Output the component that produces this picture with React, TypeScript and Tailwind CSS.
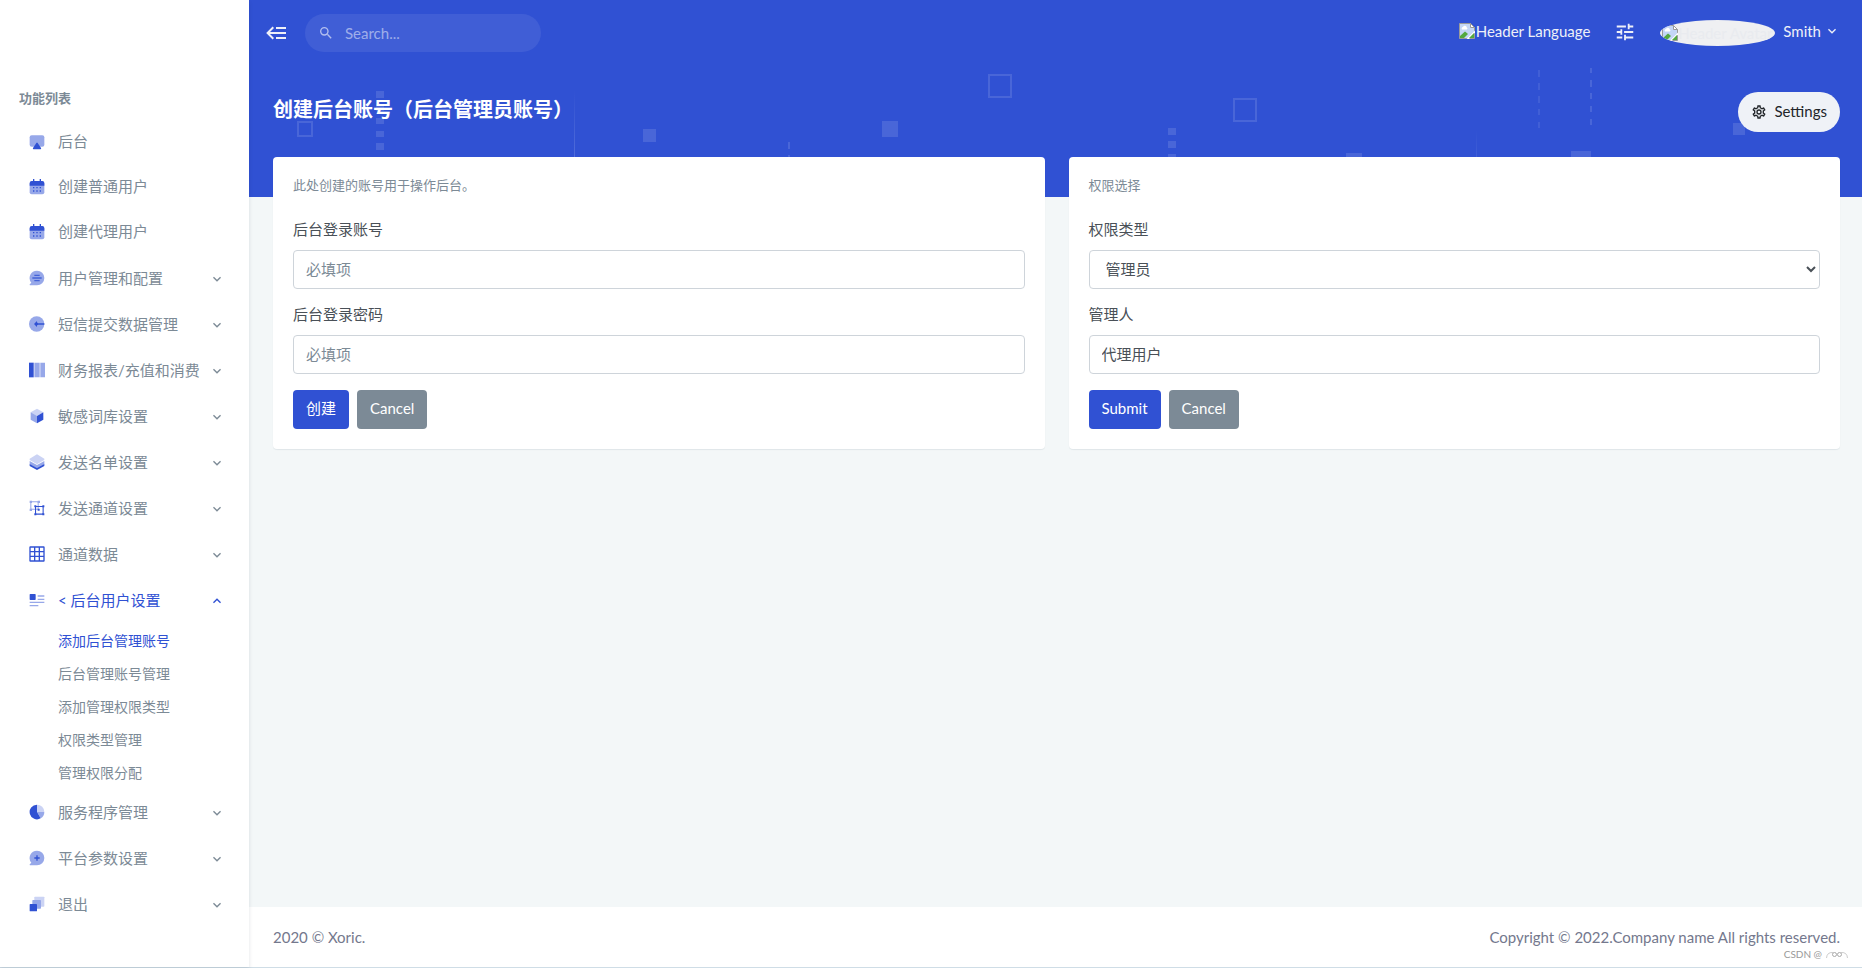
import { useState } from "react";
import type { ReactNode } from "react";

function SvgIcon({ children, className = "size-4" }: { children: ReactNode; className?: string }) {
  return (
    <svg viewBox="0 0 24 24" fill="currentColor" className={`shrink-0 ${className}`} aria-hidden="true">
      {children}
    </svg>
  );
}

const ChevronDown = ({ className }: { className: string }) => (
  <SvgIcon className={className}>
    <path d="M7.41 8.58 12 13.17l4.59-4.59L18 10l-6 6-6-6z" />
  </SvgIcon>
);

const icons: Record<string, ReactNode> = {
  airplay: (
    <>
      <path d="M4 2h16a3 3 0 0 1 3 3v11a3 3 0 0 1-3 3H4a3 3 0 0 1-3-3V5a3 3 0 0 1 3-3z" opacity=".5" />
      <path d="M11 13.5a1.3 1.3 0 0 1 2 0l5 7.5q.8 2-1 2H7q-1.8 0-1-2z" />
    </>
  ),
  calendar: (
    <>
      <rect x="1" y="4" width="22" height="19" rx="3" opacity=".5" />
      <path d="M1 10V6a3 3 0 0 1 3-3h16a3 3 0 0 1 3 3v4z" />
      <path d="M6 0h2v5H6zM16 0h2v5h-2z" />
      <path d="M6 12h2v2H6zm5 0h2v2h-2zm5 0h2v2h-2zM6 17h2v2H6zm5 0h2v2h-2zm5 0h2v2h-2z" />
    </>
  ),
  comment: (
    <>
      <path d="M12 1a11 11 0 1 1 0 22H1.5Q.5 22 1.5 21l2-2A11 11 0 0 1 12 1z" opacity=".5" />
      <path d="M8 7h8v2H8zM5 11h14v2H5zM8 15h8v2H8z" opacity=".8" />
    </>
  ),
  back: (
    <>
      <circle cx="11.5" cy="12" r="11.5" opacity=".5" />
      <path d="M7.5 12 12 7.5V11h11v2H12v3.5z" />
      <circle cx="11.5" cy="12" r="2.2" />
    </>
  ),
  columns: (
    <>
      <path d="M0 1h7v22H0z" />
      <path d="M7 1h2v22H7zM15.5 1h2v22h-2z" opacity=".3" />
      <path d="M9 1h6.5v22H9zM17.5 1H24v22h-6.5z" opacity=".5" />
    </>
  ),
  box: (
    <>
      <path d="m12 1 9.5 5.500L12 12 2.500 6.500z" opacity=".25" />
      <path d="M2.500 6.500 12 12v11l-9.500-5.500z" opacity=".5" />
      <path d="M21.500 6.500 12 12v11l9.500-5.500z" />
    </>
  ),
  layers: (
    <>
      <path d="m1 15 11 6 11-6v3l-11 6-11-6z" />
      <path d="m1 10.500 11 6 11-6v5l-11 6-11-6z" opacity=".5" />
      <path d="m12 .500 11 6.500v2l-11 6.500L1 9V7z" fill="#cbd3f4" />
    </>
  ),
  group: (
    <>
      <g opacity=".5">
        <path d="M2 2h12.500v12.500H2zm1.500 1.500V13H13V3.500z" fillRule="evenodd" />
        <path d="M1 1h3.500v3.500H1zm12 0h3.500v3.500H13zM1 13h3.500v3.500H1z" />
      </g>
      <path d="M9 9h13v13H9zm1.600 1.600v9.800h9.800v-9.800z" fillRule="evenodd" />
      <path d="M8 8h3v3H8zm12 0h3v3h-3zM8 20h3v3H8zm12 0h3v3h-3zM13 13h3v3h-3z" />
    </>
  ),
  grid: (
    <path
      d="M2 .5h20a1.500 1.500 0 0 1 1.500 1.500v20a1.500 1.500 0 0 1-1.500 1.500H2A1.500 1.500 0 0 1 .5 22V2A1.500 1.500 0 0 1 2 .5zM2.500 2.500v5h5v-5zm7 0v5h5v-5zm7 0v5h5v-5zm-14 7v5h5v-5zm7 0v5h5v-5zm7 0v5h5v-5zm-14 7v5h5v-5zm7 0v5h5v-5zm7 0v5h5v-5z"
      fillRule="evenodd"
    />
  ),
  document: (
    <>
      <rect x="1" y="3" width="9" height="9" rx="1" />
      <path d="M13 5h10v2H13zM13 10h10v2H13zM1 14.500h22v2H1zM1 19.500h13v2H1z" opacity=".5" />
    </>
  ),
  pie: (
    <>
      <path d="M12 1v11l5.500 9.500A11 11 0 1 1 12 1z" />
      <path d="M12 12h11a11 11 0 0 1-5.500 9.500z" opacity=".5" />
      <path d="M12 1a11 11 0 0 1 11 11H12z" opacity=".25" />
    </>
  ),
  commentPlus: (
    <>
      <path d="M12 1a11 11 0 1 1 0 22H1.500Q.5 22 1.500 21l2-2A11 11 0 0 1 12 1z" opacity=".5" />
      <path d="M11 8h2v3h3v2h-3v3h-2v-3H8v-2h3z" />
    </>
  ),
  copies: (
    <>
      <rect x="8" y="1" width="15" height="15" rx="1" fill="#cbd3f4" />
      <rect x="5" y="6" width="13" height="13" rx="1" fill="#97a8e9" />
      <rect x="1" y="12" width="11" height="11" rx="1" />
    </>
  ),
};

const links = [
  { icon: "airplay", label: "后台" },
  { icon: "calendar", label: "创建普通用户" },
  { icon: "calendar", label: "创建代理用户" },
];

const groups = [
  { icon: "comment", label: "用户管理和配置" },
  { icon: "back", label: "短信提交数据管理" },
  { icon: "columns", label: "财务报表/充值和消费" },
  { icon: "box", label: "敏感词库设置" },
  { icon: "layers", label: "发送名单设置" },
  { icon: "group", label: "发送通道设置" },
  { icon: "grid", label: "通道数据" },
  {
    icon: "document",
    label: "< 后台用户设置",
    children: ["添加后台管理账号", "后台管理账号管理", "添加管理权限类型", "权限类型管理", "管理权限分配"],
  },
  { icon: "pie", label: "服务程序管理" },
  { icon: "commentPlus", label: "平台参数设置" },
  { icon: "copies", label: "退出" },
];

function Sidebar() {
  const [open, setOpen] = useState("< 后台用户设置");

  return (
    <aside className="relative z-10 w-[249px] shrink-0 bg-white pt-[68px] text-[15px] text-[#7c8a96] shadow-[0_2px_4px_rgba(15,34,58,0.12)]">
      <h2 className="px-[19px] pt-5 pb-[11px] text-[13px] leading-5 font-semibold">功能列表</h2>
      <ul className="pb-px">
        {links.map((item) => (
          <li key={item.label}>
            <a href="#" className="flex h-[45px] items-center pl-[29px]">
              <SvgIcon className="mr-[13px] size-4 text-[#3051d3]">{icons[item.icon]}</SvgIcon>
              {item.label}
            </a>
          </li>
        ))}
      </ul>
      <ul>
        {groups.map((item) => {
          const active = open === item.label;
          return (
            <li key={item.label}>
              <button
                type="button"
                aria-expanded={active}
                onClick={() => setOpen(active ? "" : item.label)}
                className={`flex h-[46px] w-full items-center pr-6 pl-[29px] whitespace-nowrap ${active ? "text-[#3051d3]" : ""}`}
              >
                <SvgIcon className="mr-[13px] size-4 text-[#3051d3]">{icons[item.icon]}</SvgIcon>
                {item.label}
                <ChevronDown className={`mt-0.5 ml-auto size-4 ${active ? "rotate-180" : ""}`} />
              </button>
              {active && item.children && (
                <ul className="pt-px text-sm">
                  {item.children.map((child, i) => (
                    <li key={child}>
                      <a href="#" className={`flex h-[33px] items-center pl-[58px] ${i === 0 ? "text-[#3051d3]" : ""}`}>
                        {child}
                      </a>
                    </li>
                  ))}
                </ul>
              )}
            </li>
          );
        })}
      </ul>
    </aside>
  );
}

// faint squares and dashes behind the page title
function BannerPattern() {
  return (
    <svg className="absolute top-0 left-0 h-[197px] w-[1613px]" viewBox="249 0 1613 197" aria-hidden="true">
      <defs>
        <linearGradient id="fade" x1="0" y1="0" x2="0" y2="1">
          <stop offset="0" stopColor="#fff" stopOpacity="0" />
          <stop offset="1" stopColor="#fff" stopOpacity=".16" />
        </linearGradient>
      </defs>
      <g fill="#fff" fillOpacity=".12">
        <path d="M376 91h8v7h-8zm0 13h8v7h-8zm0 14h8v6h-8zm0 13h8v6h-8zm0 12h8v7h-8z" />
        <path d="M643 129h13v13h-13zM882 121h16v16h-16zM1346 153h16v10h-16zM1571 151h20v12h-20zM1733 123h12v12h-12z" />
        <path d="M788 142h2v7h-2zm0 13h2v7h-2z" />
        <path d="M1168 128h8v7h-8zm0 13h8v7h-8zm0 13h8v7h-8z" />
        <path d="M1538 70h2v7h-2zm0 13h2v7h-2zm0 13h2v7h-2zm0 13h2v6h-2zm0 13h2v6h-2z" opacity=".7" />
        <path d="M1590 68h2v5h-2zm0 12h2v7h-2zm0 13h2v6h-2zm0 13h2v6h-2zm0 13h2v6h-2z" />
      </g>
      <g fill="none" stroke="#fff" strokeOpacity=".12" strokeWidth="2">
        <path d="M298 122h14v14h-14zM989 75h22v22h-22zM1234 99h22v22h-22z" />
      </g>
      <path d="M574 90h1v68h-1z" fill="url(#fade)" />
      <path d="M1476 130h1v28h-1z" fill="url(#fade)" opacity=".5" />
    </svg>
  );
}

function BrokenImage() {
  return (
    <svg viewBox="0 0 16 16" className="size-4 shrink-0" aria-hidden="true">
      <path d="M.5.5h11l4 4v11H.5z" fill="#c4d6f6" stroke="#9a9a9a" />
      <path d="M11.5.5v4h4z" fill="#fff" stroke="#9a9a9a" />
      <path d="M3 6.500a1.500 1.500 0 0 1 1-2.500 2 2 0 0 1 3.800.5 1.200 1.200 0 0 1 0 2z" fill="#fff" />
      <path d="M1 15v-2l5-4.500 3 2.500-4 4z" fill="#53a93f" />
      <path d="m7.500 16 8.500-8.500v2L10 16z" fill="#fff" />
      <path d="m10 15 5-5v5z" fill="#53a93f" />
    </svg>
  );
}

function TopBar() {
  return (
    <div className="relative flex h-[66px] items-center pr-[22px] pl-4 text-[#eef0f8]">
      <button type="button" aria-label="Toggle menu" className="mr-4">
        <SvgIcon className="size-6">
          <path d="m5 13 4 4-1.400 1.420L1.180 12 7.600 5.580 9 7l-4 4h16v2zm16-7v2H11V6zm0 10v2H11v-2z" />
        </SvgIcon>
      </button>
      <label className="flex h-[38px] w-[236px] items-center gap-[11px] rounded-full bg-white/8 pl-[13px]">
        <SvgIcon className="size-4 text-white/60">
          <path d="M9.500 3A6.500 6.500 0 0 1 16 9.500c0 1.610-.59 3.090-1.560 4.230l.27.27h.79l5 5-1.500 1.500-5-5v-.79l-.27-.27A6.516 6.516 0 0 1 9.500 16a6.500 6.500 0 0 1 0-13m0 2C7 5 5 7 5 9.500S7 14 9.500 14 14 12 14 9.500 12 5 9.500 5" />
        </SvgIcon>
        <input
          type="text"
          aria-label="Search"
          placeholder="Search..."
          className="w-full min-w-0 bg-transparent pr-4 outline-none placeholder:text-white/50"
        />
      </label>
      <button type="button" className="ml-auto flex items-center gap-px pb-1">
        <BrokenImage />
        Header Language
      </button>
      <button type="button" aria-label="Preferences" className="ml-6 pb-0.5">
        <SvgIcon className="size-[22px]">
          <path d="M3 17v2h6v-2zM3 5v2h10V5zm10 16v-2h8v-2h-8v-2h-2v6zM7 9v2H3v2h4v2h2V9zm14 4v-2H11v2zm-6-4h2V7h4V5h-4V3h-2z" />
        </SvgIcon>
      </button>
      <button type="button" className="ml-6 flex items-center gap-2">
        <span className="flex h-[26px] w-[115px] items-center overflow-hidden rounded-[50%] bg-[#eff0f2] pl-0.5 whitespace-nowrap text-[#e9ebef]">
          <BrokenImage />
          Header Avatar
        </span>
        <span className="flex items-center gap-[3px] pb-1">
          Smith
          <ChevronDown className="size-4" />
        </span>
      </button>
    </div>
  );
}

const fieldClass =
  "mb-4 block h-[39px] w-full rounded-sm border border-[#ced4da] bg-white px-3 pb-0.5 text-[#495057] placeholder:text-[#7c8a96] outline-none";
const labelClass = "mb-3 block leading-[18px] text-[#495057]";

function Card({ title, submit, children }: { title: string; submit: string; children: ReactNode }) {
  return (
    <form
      onSubmit={(e) => e.preventDefault()}
      className="min-w-0 flex-1 rounded bg-white p-5 shadow-[0_1px_1px_rgba(15,34,58,0.08)]"
    >
      <p className="mb-[27px] text-[13px] leading-4 text-[#7c8a96]">{title}</p>
      {children}
      <div className="flex gap-2">
        <button type="submit" className="h-[39px] rounded-sm bg-[#3051d3] px-[13px] pb-[3px] text-white">
          {submit}
        </button>
        <button type="reset" className="h-[39px] rounded-sm bg-[#7c8a96] px-[13px] pb-[3px] text-white">
          Cancel
        </button>
      </div>
    </form>
  );
}

export default function App() {
  return (
    <div className="flex min-h-screen flex-col font-['Lato','Noto_Sans_CJK_SC',sans-serif] text-[15px]">
      <div className="flex flex-1">
        <Sidebar />
        <div className="flex min-w-0 flex-1 flex-col bg-[#f3f7f8]">
          <header className="relative overflow-hidden bg-[#3051d3] pb-10">
            <BannerPattern />
            <TopBar />
            <div className="relative flex h-[91px] items-center justify-between pr-[22px] pl-6">
              <h1 className="pb-1.5 text-xl leading-7 font-bold text-white">创建后台账号（后台管理员账号）</h1>
              <button
                type="button"
                className="flex h-10 items-center gap-[7px] rounded-full bg-[#eff2f7] px-[13px] text-[#212529]"
              >
                <SvgIcon className="size-4">
                  <path d="M19.430 12.980c.04-.32.070-.64.070-.98s-.03-.66-.07-.98l2.110-1.650c.19-.15.240-.42.120-.64l-2-3.460a.5.5 0 0 0-.61-.22l-2.490 1a7.300 7.300 0 0 0-1.690-.98l-.38-2.650A.49.49 0 0 0 14 2h-4c-.25 0-.46.180-.49.420l-.38 2.650c-.61.250-1.170.590-1.690.980l-2.490-1a.5.5 0 0 0-.61.220l-2 3.460c-.13.220-.07.490.120.640l2.110 1.650a7.900 7.900 0 0 0 0 1.960l-2.110 1.650c-.19.150-.24.420-.12.640l2 3.460c.12.220.39.300.61.220l2.490-1c.52.400 1.080.730 1.690.980l.38 2.650c.03.240.240.420.490.420h4c.25 0 .46-.18.490-.42l.38-2.650c.61-.25 1.170-.59 1.690-.98l2.490 1c.23.090.490 0 .61-.22l2-3.460c.12-.22.070-.49-.12-.64zm-1.980-1.710c.040.310.050.520.050.730s-.02.430-.05.730l-.14 1.130.890.700 1.080.840-.7 1.210-1.270-.51-1.040-.42-.9.680c-.43.320-.84.560-1.250.730l-1.060.43-.16 1.130-.2 1.350h-1.400l-.35-2.480-1.060-.43c-.43-.18-.83-.41-1.230-.71l-.91-.7-1.060.43-1.270.51-.7-1.210 1.080-.84.890-.7-.14-1.130a7 7 0 0 1 0-1.480l.14-1.130-.89-.7-1.080-.84.700-1.210 1.270.510 1.040.420.900-.68c.43-.32.840-.56 1.250-.73l1.060-.43.160-1.130.200-1.350h1.390l.35 2.480 1.060.430c.430.180.830.410 1.230.710l.910.700 1.060-.43 1.270-.51.700 1.210-1.070.850-.89.700zM12 8a4 4 0 1 0 0 8 4 4 0 0 0 0-8m0 6a2 2 0 1 1 0-4 2 2 0 0 1 0 4" />
                </SvgIcon>
                Settings
              </button>
            </div>
          </header>

          <main className="relative -mt-10 mb-6 flex flex-1 items-start gap-6 pr-[22px] pl-6">
            <Card title="此处创建的账号用于操作后台。" submit="创建">
              <label htmlFor="account" className={labelClass}>后台登录账号</label>
              <input id="account" type="text" placeholder="必填项" className={fieldClass} />
              <label htmlFor="password" className={labelClass}>后台登录密码</label>
              <input id="password" type="password" placeholder="必填项" className={fieldClass} />
            </Card>
            <Card title="权限选择" submit="Submit">
              <label htmlFor="role" className={labelClass}>权限类型</label>
              <select id="role" className={fieldClass}>
                <option>管理员</option>
              </select>
              <label htmlFor="manager" className={labelClass}>管理人</label>
              <input id="manager" type="text" defaultValue="代理用户" className={fieldClass} />
            </Card>
          </main>

          <footer className="relative flex h-[60px] items-center justify-between bg-white pr-[22px] pl-6 text-[#74788d]">
            <span>2020 © Xoric.</span>
            <span>Copyright © 2022.Company name All rights reserved.</span>
            <div className="absolute right-3.5 bottom-[5px] flex items-center gap-1 text-[10px] leading-4 text-[#999]">
              CSDN @
              <svg viewBox="0 0 22 8" className="mt-0.5 h-2 w-[22px]" fill="none" stroke="#aaa" aria-hidden="true">
                <path d="M.5 7Q1 1 7 1.500M15 1.500Q21 1 21.500 7" strokeOpacity=".6" />
                <circle cx="8.500" cy="3.500" r="2" />
                <circle cx="13.500" cy="3.500" r="2" />
              </svg>
            </div>
          </footer>
        </div>
      </div>
      <div className="h-px bg-[#cfdde6]" />
    </div>
  );
}
